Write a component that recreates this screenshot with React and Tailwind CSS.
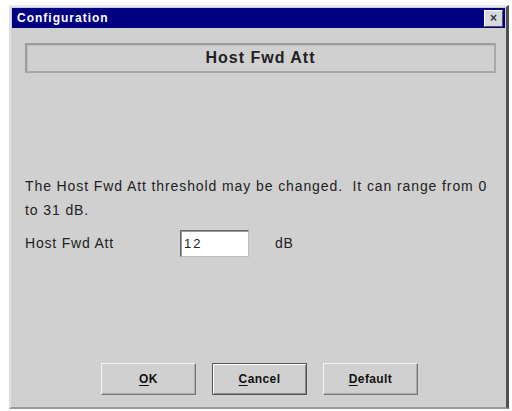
import React from "react";

const font = { fontFamily: '"Liberation Sans", Arial, sans-serif' };

function DialogButton({ label, focused }) {
  const [first, ...rest] = label;
  return (
    <button
      className={`w-[95px] h-[32px] bg-[#d0d0d0] text-[12px] font-bold text-[#111] tracking-[0.4px] flex items-center justify-center border ${
        focused
          ? "border-[#555] shadow-[inset_1px_1px_0_#fff,inset_-1px_-1px_0_#888]"
          : "border-t-[#f4f4f4] border-l-[#f4f4f4] border-r-[#777] border-b-[#777] shadow-[inset_-1px_-1px_0_#aaa]"
      }`}
    >
      <span className="underline decoration-1 underline-offset-2">{first}</span>
      {rest.join("")}
    </button>
  );
}

export default function App() {
  return (
    <div className="w-[512px] h-[411px] bg-white pt-[5px] pl-[9px]" style={font}>
      <div className="w-[500px] h-[404px] bg-[#d0d0d0] border-t-2 border-l-2 border-t-[#e8e8f0] border-l-[#e0e0e0] border-r-[3px] border-b-2 border-r-[#505050] border-b-[#9a9a9a] flex flex-col">
        {/* title bar */}
        <div className="mt-[1px] mx-[1px] h-[20px] bg-[#000080] flex items-center justify-between pl-[5px] pr-[2px]">
          <span className="text-white text-[12px] font-bold tracking-[1px]">Configuration</span>
          <span className="w-[19px] h-[17px] bg-[#d8d8e0] border border-t-white border-l-white border-r-[#555] border-b-[#555] flex items-center justify-center text-[12px] font-bold text-[#333] leading-none">
            ×
          </span>
        </div>

        <div className="flex-1 flex flex-col pl-[14px] pr-[10px] pt-[15px]">
          {/* heading */}
          <div className="h-[30px] border-2 border-t-[#9c9c9c] border-l-[#9c9c9c] border-r-[#a8a8a8] border-b-[#a8a8a8] shadow-[inset_1px_1px_0_#c0c0c0] flex items-center justify-center">
            <span className="text-[16px] font-bold text-[#222] tracking-[1px]">Host Fwd Att</span>
          </div>

          {/* description */}
          <p className="mt-[101px] w-[468px] text-[14px] leading-[24px] text-[#222] tracking-[0.9px]">
            The Host Fwd Att threshold may be changed.&nbsp; It can range from 0 to 31 dB.
          </p>

          <div className="mt-[8px] flex items-center h-[27px] text-[14px] text-[#222] tracking-[0.8px]">
            <span className="w-[155px]">Host Fwd Att</span>
            <div className="w-[69px] h-[27px] bg-white border border-t-[#666] border-l-[#666] border-r-[#bbb] border-b-[#bbb] shadow-[inset_1px_1px_0_#999] flex items-center pl-[3px] text-[13px] tracking-[2px]">
              12
            </div>
            <span className="ml-[26px]">dB</span>
          </div>

          {/* actions */}
          <div className="mt-auto mb-[12px] flex justify-center gap-[16px] pr-[2px]">
            <DialogButton label="OK" />
            <DialogButton label="Cancel" focused />
            <DialogButton label="Default" />
          </div>
        </div>
      </div>
    </div>
  );
}
